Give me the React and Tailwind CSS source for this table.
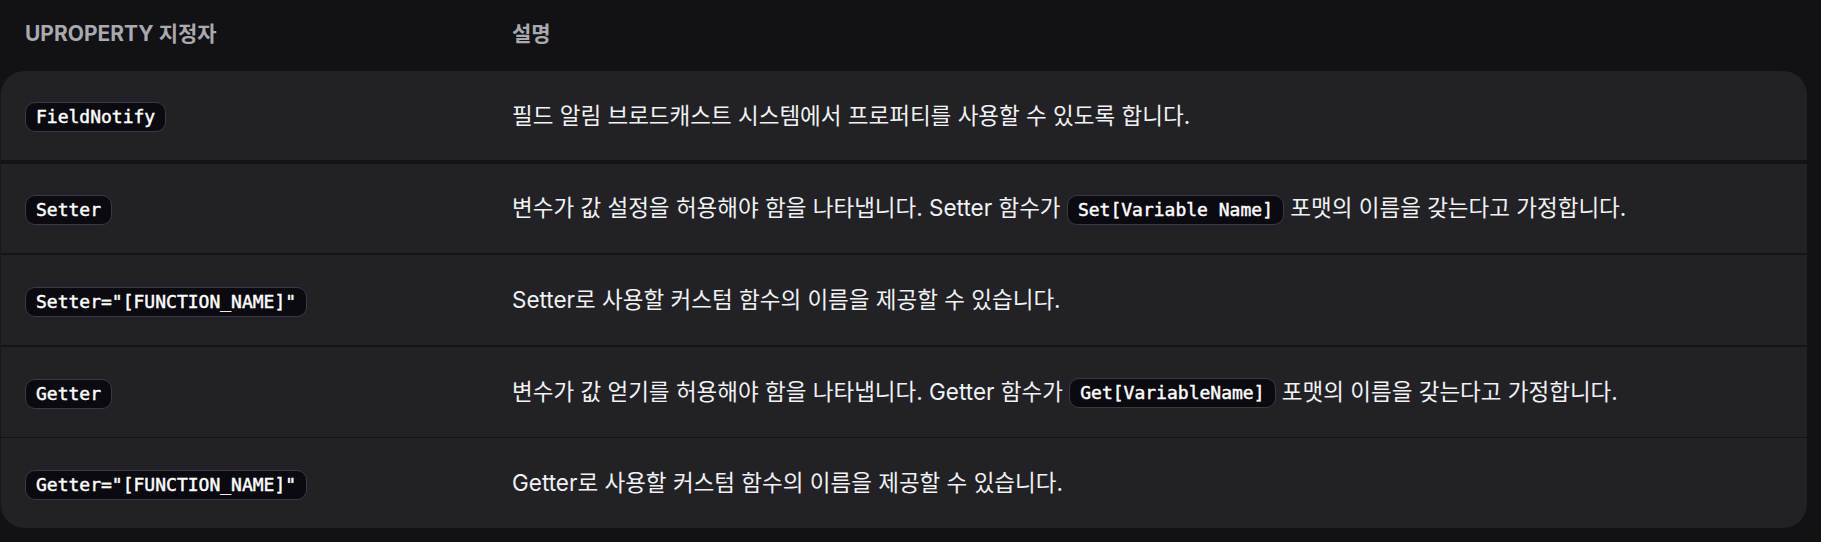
import React from "react";

const Code = ({ children }) => (
  <code className="inline-flex items-center h-[30px] px-[10px] rounded-[10px] border border-[#3a3a43] bg-[#0a0a10] text-white text-[18px] font-normal [-webkit-text-stroke:0.45px_white] leading-none align-middle whitespace-pre [font-family:'DejaVu_Sans_Mono','Liberation_Mono',monospace]">
    {children}
  </code>
);

const rows = [
  {
    code: "FieldNotify",
    desc: <>필드 알림 브로드캐스트 시스템에서 프로퍼티를 사용할 수 있도록 합니다.</>,
    h: "h-[93px]",
    sep: "border-b-[4px]",
  },
  {
    code: "Setter",
    desc: (
      <>
        변수가 값 설정을 허용해야 함을 나타냅니다. Setter 함수가{" "}
        <Code>Set[Variable Name]</Code> 포맷의 이름을 갖는다고 가정합니다.
      </>
    ),
    h: "h-[91px]",
    sep: "border-b-[2px]",
  },
  {
    code: 'Setter="[FUNCTION_NAME]"',
    desc: <>Setter로 사용할 커스텀 함수의 이름을 제공할 수 있습니다.</>,
    h: "h-[92px]",
    sep: "border-b-[2px]",
  },
  {
    code: "Getter",
    desc: (
      <>
        변수가 값 얻기를 허용해야 함을 나타냅니다. Getter 함수가{" "}
        <Code>Get[VariableName]</Code> 포맷의 이름을 갖는다고 가정합니다.
      </>
    ),
    h: "h-[91px]",
    sep: "border-b",
  },
  {
    code: 'Getter="[FUNCTION_NAME]"',
    desc: <>Getter로 사용할 커스텀 함수의 이름을 제공할 수 있습니다.</>,
    h: "h-[90px]",
    sep: "",
  },
];

export default function App() {
  return (
    <div className="w-[1821px] h-[542px] bg-[#111116] overflow-hidden [font-family:Inter,'Noto_Sans_CJK_KR',sans-serif]">
      <div className="flex items-center h-[71px] pb-[3px] text-[21px] font-bold text-[#a9a9ae]">
        <div className="w-[512px] pl-[25px]">UPROPERTY 지정자</div>
        <div className="flex-1">설명</div>
      </div>
      <div className="w-[1807px] rounded-3xl bg-[#212126] overflow-hidden border-l border-[#18181c]">
        {rows.map((r, i) => (
          <div
            key={i}
            className={`flex items-center ${r.h} ${r.sep} border-[#131318]`}
          >
            <div className="w-[511px] pl-[24px] pt-[3px] flex items-center">
              <Code>{r.code}</Code>
            </div>
            <div className="flex-1 text-[22.5px] text-[#f2f2f4] leading-[32px]">
              {r.desc}
            </div>
          </div>
        ))}
      </div>
    </div>
  );
}
